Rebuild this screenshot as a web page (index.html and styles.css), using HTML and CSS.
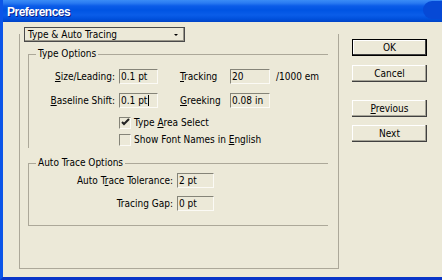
FILE: index.html
```html
<!DOCTYPE html>
<html lang="en">
<head>
    <meta charset="UTF-8">
    <meta name="viewport" content="width=device-width, initial-scale=1.0">
    <title>Preferences</title>
    <link rel="stylesheet" href="styles.css">
</head>
<body>

    <div class="window">
        <div class="titlebar">Preferences</div>

        <div class="client">
            <div class="panel">
                <div class="select">
                    <span>Type &amp; Auto Tracing</span>
                    <span class="arrow"></span>
                </div>

                <fieldset class="group type-options">
                    <legend>Type Options</legend>

                    <div class="row">
                        <label class="label"><u>S</u>ize/Leading:</label>
                        <div class="field narrow">0.1 pt</div>
                        <label class="label-2"><u>T</u>racking</label>
                        <div class="field wide">20</div>
                        <span class="unit">/1000 em</span>
                    </div>

                    <div class="row">
                        <label class="label"><u>B</u>aseline Shift:</label>
                        <div class="field narrow">0.1 pt<span class="caret"></span></div>
                        <label class="label-2"><u>G</u>reeking</label>
                        <div class="field wide">0.08 in</div>
                    </div>

                    <div class="check-row">
                        <span class="checkbox checked">
                            <svg width="9" height="9" viewBox="0 0 9 9"><polyline points="1,4 3,6 8,1" fill="none" stroke="#222" stroke-width="2"/></svg>
                        </span>
                        <span>Type <u>A</u>rea Select</span>
                    </div>

                    <div class="check-row">
                        <span class="checkbox"></span>
                        <span>Show Font Names in <u>E</u>nglish</span>
                    </div>
                </fieldset>

                <fieldset class="group trace-options">
                    <legend>Auto Trace Options</legend>

                    <div class="row">
                        <label class="label long">Auto T<u>r</u>ace Tolerance:</label>
                        <div class="field short">2 pt</div>
                    </div>

                    <div class="row">
                        <label class="label long">Tracing Gap:</label>
                        <div class="field short">0 pt</div>
                    </div>
                </fieldset>
            </div>

            <div class="buttons">
                <button class="btn default">OK</button>
                <button class="btn">Cancel</button>
                <button class="btn spaced"><u>P</u>revious</button>
                <button class="btn">Next</button>
            </div>
        </div>
    </div>

</body>
</html>
```

FILE: styles.css
```css
body {
    margin: 0;
    overflow: hidden;
    font-family: "DejaVu Sans Condensed", "DejaVu Sans", sans-serif;
    font-stretch: condensed;
    font-size: 10px;
    color: #000;
}
u {
    text-decoration-thickness: 1px;
    text-underline-offset: 1px;
}
.window {
    width: 442px;
    height: 280px;
    box-sizing: border-box;
    background: #ece9d8;
    border-left: 3px solid #0b55e8;
    border-bottom: 3px solid #0a36c8;
}
.titlebar {
    position: relative;
    height: 22px;
    box-sizing: border-box;
    padding: 3px 0 0 4px;
    line-height: 19px;
    font-family: "Liberation Sans", Arial, sans-serif;
    font-stretch: normal;
    font-weight: bold;
    font-size: 12px;
    letter-spacing: -0.5px;
    color: #fff;
    text-shadow: 1px 1px 0 #0a1e8c;
    background: linear-gradient(to bottom, #3a8cf6 0, #2a7bf2 3px, #0b5ce8 6px, #0054e3 10px, #0a5de9 15px, #0050dc 19px, #0043c6 22px);
}
.titlebar::after {
    content: "";
    position: absolute;
    left: 420px;
    top: 1px;
    width: 30px;
    height: 18px;
    border-radius: 9px;
    background: #0649d6;
}
.client {
    display: flex;
    align-items: flex-start;
}
.panel {
    margin: 12px 0 0 16px;
    width: 320px;
    height: 235px;
    box-sizing: border-box;
    border: 1px solid #aca899;
    border-top: none;
}
.select {
    display: flex;
    align-items: center;
    justify-content: space-between;
    margin: -7px 0 0 4px;
    width: 161px;
    height: 15px;
    box-sizing: border-box;
    padding: 0 6px 0 3px;
    border: 1px solid #4a4a4a;
    box-shadow: inset -1px -1px 0 #9a978a;
    line-height: 13px;
}
.arrow {
    width: 0;
    height: 0;
    border-left: 2px solid transparent;
    border-right: 2px solid transparent;
    border-top: 2px solid #000;
}
.group {
    margin: 6px 0 0 8px;
    padding: 9px 0 0 0;
    width: 300px;
    box-sizing: border-box;
    border: 1px solid #aca899;
    border-right: none;
    min-inline-size: 0;
}
.group legend {
    margin-left: 7px;
    padding: 0 2px;
    line-height: 12px;
}
.type-options {
    border-bottom: none;
}
.trace-options {
    margin-top: 9px;
    padding: 4px 0 14px 0;
}
.row {
    display: flex;
    align-items: center;
    height: 15px;
}
.row + .row {
    margin-top: 9px;
}
.trace-options .row + .row {
    margin-top: 8px;
}
.label {
    width: 86px;
    margin-right: 4px;
    text-align: right;
    white-space: nowrap;
}
.label.long {
    width: 144px;
}
.label-2 {
    width: 50px;
    margin-left: 22px;
}
.field {
    position: relative;
    height: 15px;
    box-sizing: border-box;
    padding-left: 1px;
    border-top: 1px solid #858478;
    border-left: 1px solid #858478;
    border-right: 1px solid #fbfaf5;
    border-bottom: 1px solid #fbfaf5;
    line-height: 13px;
    white-space: nowrap;
}
.field.narrow {
    width: 39px;
}
.field.wide {
    width: 40px;
}
.field.short {
    width: 37px;
}
.caret {
    display: inline-block;
    width: 1px;
    height: 11px;
    margin-left: 1px;
    vertical-align: -2px;
    background: #000;
}
.unit {
    margin-left: 6px;
}
.check-row {
    display: flex;
    align-items: center;
    gap: 3px;
    height: 17px;
    margin-left: 90px;
}
.row + .check-row {
    margin-top: 6px;
}
.checkbox {
    display: flex;
    align-items: center;
    justify-content: center;
    width: 12px;
    height: 12px;
    box-sizing: border-box;
    border-top: 1px solid #858478;
    border-left: 1px solid #858478;
    border-right: 1px solid #fbfaf5;
    border-bottom: 1px solid #fbfaf5;
}
.buttons {
    display: flex;
    flex-direction: column;
    margin: 17px 0 0 13px;
}
.btn {
    width: 75px;
    height: 17px;
    padding: 0;
    font: inherit;
    color: #000;
    background: #ece9d8;
    border: none;
    box-shadow: inset -1px -1px 0 #404040, inset -2px -2px 0 #a6a497, inset 1px 1px 0 #fff;
}
.btn + .btn {
    margin-top: 8px;
}
.btn.default {
    border: 1px solid #000;
    box-shadow: inset -1px -1px 0 #404040, inset 1px 1px 0 #fff;
}
.btn.default + .btn {
    margin-top: 9px;
}
.btn.spaced {
    margin-top: 18px;
}
```
